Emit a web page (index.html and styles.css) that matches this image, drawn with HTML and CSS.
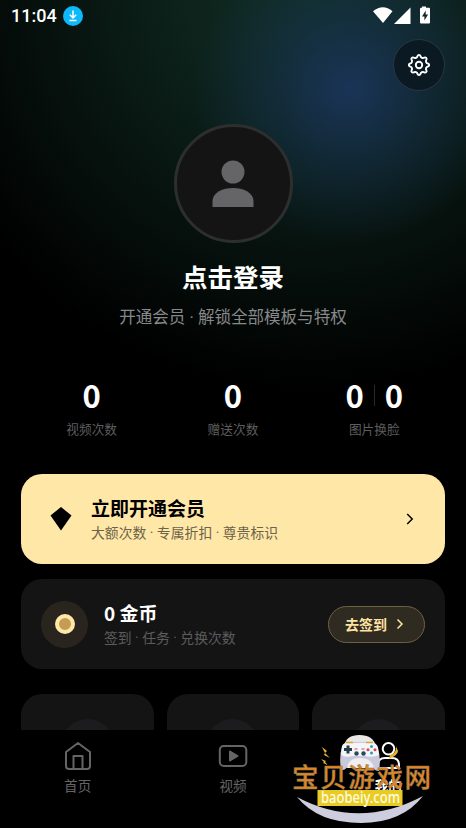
FILE: index.html
```html
<!DOCTYPE html>
<html lang="zh-CN">
<head>
<meta charset="utf-8">
<meta name="viewport" content="width=device-width, initial-scale=1">
<title>我的</title>
<link rel="stylesheet" href="styles.css">
</head>
<body>
<div class="app">
  <header class="status">
    <span class="time">11:04</span>
    <svg class="download" viewBox="0 0 20 20"><circle cx="10" cy="10" r="10" fill="#0db8fb"/><path d="M10 4.600v7M6.800 8.700l3.200 3.200 3.200-3.200M6.500 14.400h7" fill="none" stroke="#fff" stroke-width="1.500"/></svg>
    <svg class="signals" viewBox="0 0 60 20" fill="#fff">
      <path d="M0 6.200Q10-1.800 19.500 6.200L10 18z"/>
      <path d="M37.500 2.500V19H21z"/>
      <path fill-rule="evenodd" d="M49 1.500h4v1.300h3q1 0 1 1V17.500q0 1-1 1H48q-1 0-1-1V3.800q0-1 1-1h1zM52.700 5.500l-3.700 6h2.400v4l3.700-6h-2.400z"/>
    </svg>
  </header>
  <div class="toolbar">
    <button class="settings" aria-label="设置">
      <svg viewBox="-12 -12 24 24" fill="none" stroke="#fff" stroke-width="1.900"><circle r="3.200"/><path d="M9.090-1.440A1.500 1.500 0 0 1 9.090 1.440A2.500 2.500 0 0 0 7.440 5.410A1.500 1.500 0 0 1 5.410 7.440A2.500 2.500 0 0 0 1.440 9.090A1.500 1.500 0 0 1-1.440 9.090A2.500 2.500 0 0 0-5.410 7.440A1.500 1.500 0 0 1-7.440 5.410A2.500 2.500 0 0 0-9.090 1.440A1.500 1.500 0 0 1-9.090-1.440A2.500 2.500 0 0 0-7.440-5.410A1.500 1.500 0 0 1-5.410-7.440A2.500 2.500 0 0 0-1.440-9.090A1.500 1.500 0 0 1 1.440-9.090A2.500 2.500 0 0 0 5.410-7.440A1.500 1.500 0 0 1 7.440-5.410A2.500 2.500 0 0 0 9.090-1.440Z"/></svg>
    </button>
  </div>
  <main>
    <section class="profile">
      <div class="avatar"><svg viewBox="0 0 42 48" fill="#656567"><circle cx="21" cy="12" r="11.500"/><path d="M.5 47V41C.5 32.500 11 28 21 28S41.500 32.500 41.500 41V47z"/></svg></div>
      <h1>点击登录</h1>
      <p>开通会员 · 解锁全部模板与特权</p>
    </section>
    <section class="stats">
      <div class="stat"><div class="num">0</div><div class="lab">视频次数</div></div>
      <div class="stat"><div class="num">0</div><div class="lab">赠送次数</div></div>
      <div class="stat"><div class="num"><span>0</span><i></i><span>0</span></div><div class="lab">图片换脸</div></div>
    </section>
    <section class="card vip">
      <svg class="gem" viewBox="0 0 22 24"><path d="M11 0L21.500 8.500 11 23.500.5 8.500z"/></svg>
      <div class="copy"><h2>立即开通会员</h2><p>大额次数 · 专属折扣 · 尊贵标识</p></div>
      <svg class="arrow" viewBox="0 0 8 12"><path d="M1.200 1l5 5-5 5"/></svg>
    </section>
    <section class="card coins">
      <div class="coin"><span></span></div>
      <div class="copy"><h2>0 金币</h2><p>签到 · 任务 · 兑换次数</p></div>
      <button class="sign">去签到<svg class="arrow" viewBox="0 0 8 12"><path d="M1.500 1.500l4.500 4.500-4.500 4.500"/></svg></button>
    </section>
    <section class="tiles">
      <div class="tile"><span></span></div>
      <div class="tile"><span></span></div>
      <div class="tile"><span></span></div>
    </section>
  </main>
  <nav class="tabs">
    <a><svg viewBox="0 0 30 30"><path d="M3 11L15 2l12 9v14q0 3-3 3H6q-3 0-3-3zM10.500 28V15h9v13"/></svg>首页</a>
    <a><svg viewBox="0 0 30 30"><rect x="1.800" y="5" width="26.500" height="20" rx="4"/><path d="M12 10.500v9l7.500-4.500z" fill="currentColor"/></svg>视频</a>
    <a class="active"><svg viewBox="0 0 30 30"><circle cx="15.500" cy="7.800" r="5.800"/><path d="M5 27v-3q0-7 7-7h7q7 0 7 7v3z"/></svg>我的</a>
  </nav>
  <svg class="mark" viewBox="0 0 150 98">
    <path d="M7 67Q69 100 133 66Q112 93 71 93Q28 93 7 67z" fill="#cdcddd"/>
    <g>
      <path d="M54 16Q56 5 69.500 5T86 16z" fill="#e9e6e6"/>
      <path d="M52 17Q54 12 62 12H78Q87 12 88 18Q91 29 89 41Q83 41 80 33L60 33Q56 41 51 40Q49 26 52 17z" fill="#c9cbdc"/>
      <path d="M57 38Q58 28 70 28T84 38z" fill="#f0eef0"/>
      <path d="M52 16Q54 11 62 13H78Q87 12 88 18L89 25Q82 28 75 26H63Q53 28 51 24z" fill="#f5f4f6"/>
      <path d="M56 12.500h7M76 12.500h7" stroke="#d9a62d" stroke-width="1.500"/>
      <path d="M58 15.500v8M54 19.500h8" stroke="#253e4c" stroke-width="3"/>
      <circle cx="66.500" cy="23.500" r="2.200" fill="#29485a"/><circle cx="73.500" cy="23.500" r="2.200" fill="#29485a"/>
      <path d="M64.500 19h3M71.500 19h3" stroke="#d54757"/>
      <circle cx="81.500" cy="16.500" r="1.500" fill="#17a9bf"/><circle cx="81.500" cy="23" r="1.500" fill="#269dbd"/><circle cx="78" cy="19.700" r="1.500" fill="#e04454"/><circle cx="85" cy="19.700" r="1.500" fill="#e04454"/>
    </g>
    <path d="M32 17l5 4-2 2 5 5-6-3 1-2zM31 29l5 2-1 1 3 3-5-2 1-1zM106 16q1 7-6 9l-1 4q9-4 9-8z" fill="#e8b331"/>
    <text class="mark-title" x="2" y="56.500" textLength="139">宝贝游戏网</text>
    <rect x="27.500" y="60" width="85" height="16" fill="#e8cc25"/>
    <text class="mark-url" x="31" y="72.500" textLength="79" lengthAdjust="spacingAndGlyphs">baobeiy.com</text>
  </svg>
</div>
</body>
</html>
```
FILE: styles.css
```css
* { box-sizing: border-box; margin: 0; padding: 0; }
body { background: #000; color: #fff; font-family: Roboto, "Noto Sans CJK SC", sans-serif; }
button { font: inherit; color: inherit; }
svg { display: block; flex: none; }
.app {
  position: relative; width: 466px; height: 828px; overflow: hidden; display: flex; flex-direction: column;
  background:
    radial-gradient(circle 155px at 350px 88px, rgba(27, 53, 92, .92), rgba(24, 52, 86, .45) 50%, rgba(20, 50, 80, 0)),
    radial-gradient(circle 400px at 310px -10px, #112e24, #0c211a 35%, #000) #000;
}
.status { height: 32px; display: flex; align-items: center; padding: 0 34px 0 11px; flex: none; }
.time { font-size: 18px; font-weight: 500; line-height: 32px; }
.download { width: 20px; height: 20px; margin-left: 6px; }
.signals { width: 60px; height: 20px; margin-left: auto; margin-right: -1px; margin-top: -2px; }
.toolbar { display: flex; justify-content: flex-end; padding: 7px 21px 0; flex: none; }
.settings { width: 52px; height: 52px; border-radius: 50%; background: #0b1923; border: 1px solid #29363f; display: grid; place-items: center; }
.settings svg { width: 24px; height: 24px; }
main { flex: 1; min-height: 0; overflow: hidden; padding: 33px 21px 0; }
.profile { display: flex; flex-direction: column; align-items: center; }
.avatar { width: 119px; height: 119px; border-radius: 50%; background: #141414; border: 3px solid #2d2f2f; display: grid; place-items: center; }
.avatar svg { width: 42px; height: 48px; }
h1 { font-size: 25.500px; line-height: 38px; font-weight: 700; margin-top: 16px; }
.profile p { font-size: 16.550px; line-height: 24px; color: #87888a; margin-top: 9px; }
.stats { display: grid; grid-template-columns: repeat(3, 1fr); margin-top: 47px; }
.stat { text-align: center; }
.num { font-family: "Noto Sans CJK SC", sans-serif; font-size: 31px; line-height: 36px; font-weight: 700; display: flex; justify-content: center; align-items: center; }
.num i { width: 1px; height: 21px; background: #292929; margin: 0 10px; }
.lab { font-size: 12.700px; line-height: 20px; color: #5d5d5f; margin-top: 7px; }
.card { height: 90px; border-radius: 21px; display: flex; align-items: center; }
.copy { flex: 1; }
.copy h2 { font-family: "Noto Sans CJK SC", sans-serif; font-size: 19px; line-height: 26px; font-weight: 700; }
.copy p { font-size: 13.850px; line-height: 20px; margin-top: 2px; }
.vip { margin-top: 34px; background: #ffe7a8; color: #000; padding: 0 31px 0 29px; gap: 19px; }
.gem { width: 22px; height: 24px; }
.vip .copy p { color: #6d6349; }
.arrow { width: 8px; height: 12px; fill: none; stroke: currentColor; stroke-width: 1.500; }
.coins { margin-top: 15px; background: #141414; padding: 0 20px; gap: 16px; }
.coin { width: 47px; height: 47px; border-radius: 50%; background: #29251e; display: grid; place-items: center; }
.coin span { width: 20px; height: 20px; border-radius: 50%; background: #c49c54; border: 4.500px solid #ffe7a8; }
.coins .copy p { color: #5c5c5e; }
.sign { width: 97px; height: 37px; border-radius: 19px; border: 1px solid #6e6045; background: #302b21; color: #ffe3a4; display: flex; align-items: center; justify-content: center; gap: 9px; padding-right: 4px; font-size: 14px; font-weight: 700; }
.tiles { display: grid; grid-template-columns: repeat(3, 1fr); gap: 13px; margin-top: 25px; }
.tile { height: 120px; border-radius: 21px; background: #141414; padding-top: 25px; }
.tile span { display: block; width: 53px; height: 53px; margin: 0 auto; border-radius: 50%; background: #1c1c1e; }
.tabs { height: 98px; flex: none; display: grid; grid-template-columns: repeat(3, 1fr); background: #000; }
.tabs a { display: flex; flex-direction: column; align-items: center; padding-top: 11px; color: #656567; font-size: 13.600px; line-height: 20px; gap: 5px; }
.tabs svg { width: 30px; height: 30px; fill: none; stroke: currentColor; stroke-width: 2; stroke-linejoin: round; }
.tabs .active { color: #fff; font-weight: 700; }
.mark { position: absolute; left: 290px; top: 730px; width: 150px; height: 98px; }
.mark-title { font: 500 26.500px "Noto Sans CJK SC", sans-serif; fill: #df8623; stroke: #8d765d; stroke-width: .5px; }
.mark-url { font: 500 16px "Noto Sans", sans-serif; fill: #fffce0; }
```
